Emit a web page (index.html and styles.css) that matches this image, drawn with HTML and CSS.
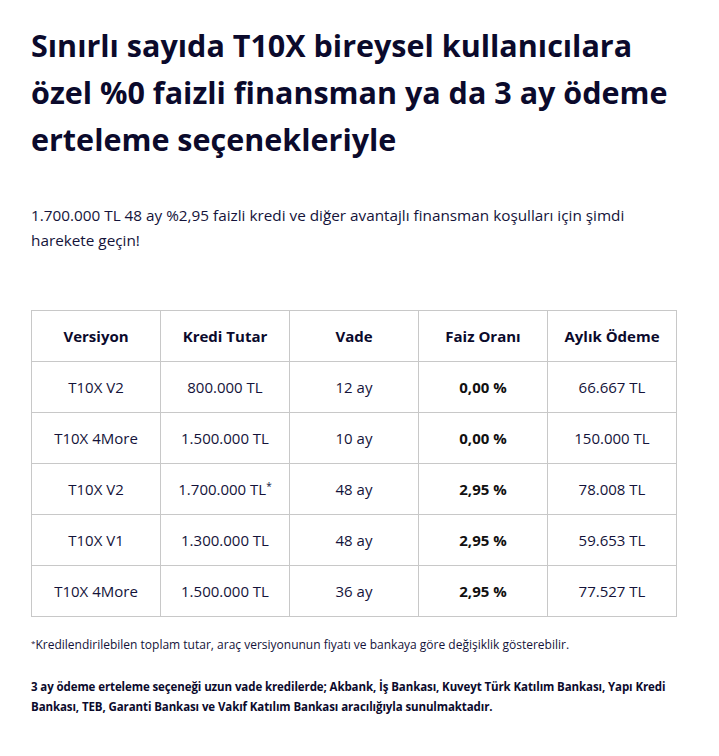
FILE: index.html
```html
<!DOCTYPE html>
<html lang="tr">
<head>
<meta charset="utf-8">
<link rel="stylesheet" href="styles.css">
</head>
<body>
<main class="page">
  <h1 class="title">Sınırlı sayıda T10X bireysel kullanıcılara özel %0 faizli finansman ya da 3 ay ödeme erteleme seçenekleriyle</h1>
  <p class="lead">1.700.000 TL 48 ay %2,95 faizli kredi ve diğer avantajlı finansman koşulları için şimdi harekete geçin!</p>
  <table class="rates">
    <thead>
      <tr><th>Versiyon</th><th>Kredi Tutar</th><th>Vade</th><th>Faiz Oranı</th><th>Aylık Ödeme</th></tr>
    </thead>
    <tbody>
      <tr><td>T10X V2</td><td>800.000 TL</td><td>12 ay</td><td class="b">0,00 %</td><td>66.667 TL</td></tr>
      <tr><td>T10X 4More</td><td>1.500.000 TL</td><td>10 ay</td><td class="b">0,00 %</td><td>150.000 TL</td></tr>
      <tr><td>T10X V2</td><td>1.700.000 TL<sup>*</sup></td><td>48 ay</td><td class="b">2,95 %</td><td>78.008 TL</td></tr>
      <tr><td>T10X V1</td><td>1.300.000 TL</td><td>48 ay</td><td class="b">2,95 %</td><td>59.653 TL</td></tr>
      <tr><td>T10X 4More</td><td>1.500.000 TL</td><td>36 ay</td><td class="b">2,95 %</td><td>77.527 TL</td></tr>
    </tbody>
  </table>
  <p class="note"><sup>*</sup>Kredilendirilebilen toplam tutar, araç versiyonunun fiyatı ve bankaya göre değişiklik gösterebilir.</p>
  <p class="banks">3 ay ödeme erteleme seçeneği uzun vade kredilerde; Akbank, İş Bankası, Kuveyt Türk Katılım Bankası, Yapı Kredi Bankası, TEB, Garanti Bankası ve Vakıf Katılım Bankası aracılığıyla sunulmaktadır.</p>
</main>
</body>
</html>
```

FILE: styles.css
```css
html, body {
  margin: 0;
  padding: 0;
  background: #ffffff;
}
body {
  font-family: "Open Sans", "Noto Sans", sans-serif;
  color: #14133a;
}
.page {
  width: 646px;
  padding: 22px 0 0 31px;
}
.title {
  margin: 0;
  width: 660px;
  font-size: 30.5px;
  line-height: 47px;
  font-weight: 700;
  color: #0b0a2c;
}
.lead {
  margin: 40px 0 0;
  font-size: 15.3px;
  line-height: 25px;
  width: 620px;
}
.rates {
  margin-top: 57px;
  width: 646px;
  border-collapse: collapse;
  table-layout: fixed;
  font-size: 15px;
}
.rates th, .rates td {
  border: 1px solid #c8c8c8;
  text-align: center;
  height: 50px;
  padding: 0;
}
.rates th {
  font-weight: 700;
  color: #0b0a2c;
}
.rates td.b {
  font-weight: 700;
  color: #111;
}
.rates sup {
  font-size: 10px;
  vertical-align: 5px;
  line-height: 0;
}
.note {
  margin: 18px 0 0;
  font-size: 12px;
  line-height: 20px;
}
.note sup {
  font-size: 8px;
  vertical-align: 3px;
  line-height: 0;
}
.banks {
  margin: 22px 0 0;
  font-size: 11.5px;
  letter-spacing: -0.1px;
  line-height: 20px;
  font-weight: 700;
  color: #0b0a2c;
}
```
